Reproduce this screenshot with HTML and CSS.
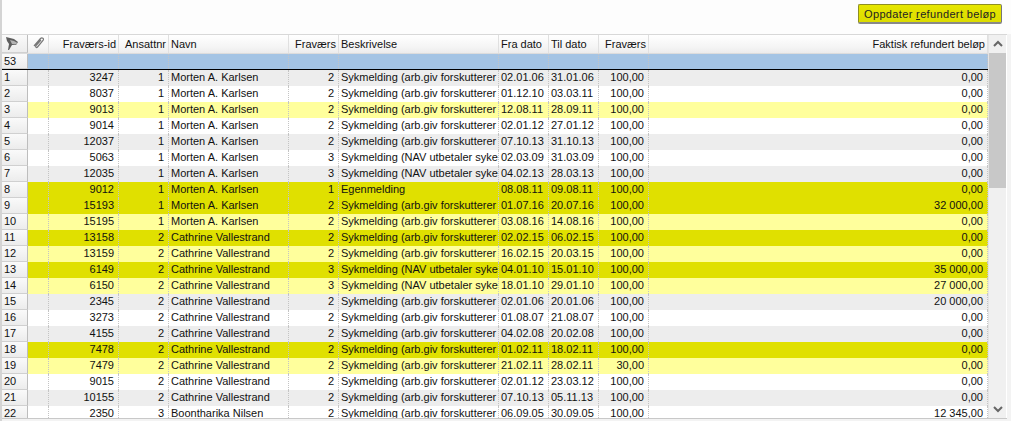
FILE: index.html
```html
<!DOCTYPE html>
<html lang="no">
<head>
<meta charset="utf-8">
<title>Fravær</title>
<link rel="stylesheet" href="styles.css">
</head>
<body>
<div class="app">
  <div class="toolbar"><button class="update"><span>Oppdater <u>r</u>efundert beløp</span></button></div>
  <div class="panel">
    <div class="grid">
      <div class="row head">
        <div class="c rh"><svg width="20" height="18" viewBox="0 0 20 18"><path d="M1 2 L9 4 L13 7 L11 10 L7 10 L4 15 L3 15 L4 9 L2 6 Z" fill="#5e5e5e"/><path d="M5 5 L9 6 L12.500 8 L10.500 9.500 L7 9 Z" fill="#b4b4b4"/></svg></div>
        <div class="c at"><svg width="16" height="16" viewBox="0 0 16 16"><path d="M3 11 L9.500 3.500 C11 2 13.500 3.500 12 5.500 L6.500 12 C5.500 13.200 4 12 5 10.700 L10 5" fill="none" stroke="#777" stroke-width="1.200"/></svg></div>
        <div class="c id r">Fraværs-id</div><div class="c an r">Ansattnr</div><div class="c na">Navn</div><div class="c ty r">Fraværs</div><div class="c be">Beskrivelse</div><div class="c fr">Fra dato</div><div class="c ti">Til dato</div><div class="c pc r">Fraværs</div><div class="c am r">Faktisk refundert beløp</div>
      </div>
      <div class="row sum"><div class="c rh">53</div><div class="c at"></div><div class="c id"></div><div class="c an"></div><div class="c na"></div><div class="c ty"></div><div class="c be"></div><div class="c fr"></div><div class="c ti"></div><div class="c pc"></div><div class="c am"></div></div>
      <div class="row gray"><div class="c rh">1</div><div class="c at"></div><div class="c id r">3247</div><div class="c an r">1</div><div class="c na">Morten A. Karlsen</div><div class="c ty r">2</div><div class="c be">Sykmelding (arb.giv forskutterer</div><div class="c fr">02.01.06</div><div class="c ti">31.01.06</div><div class="c pc r">100,00</div><div class="c am r">0,00</div></div>
      <div class="row"><div class="c rh">2</div><div class="c at"></div><div class="c id r">8037</div><div class="c an r">1</div><div class="c na">Morten A. Karlsen</div><div class="c ty r">2</div><div class="c be">Sykmelding (arb.giv forskutterer</div><div class="c fr">01.12.10</div><div class="c ti">03.03.11</div><div class="c pc r">100,00</div><div class="c am r">0,00</div></div>
      <div class="row pale"><div class="c rh">3</div><div class="c at"></div><div class="c id r">9013</div><div class="c an r">1</div><div class="c na">Morten A. Karlsen</div><div class="c ty r">2</div><div class="c be">Sykmelding (arb.giv forskutterer</div><div class="c fr">12.08.11</div><div class="c ti">28.09.11</div><div class="c pc r">100,00</div><div class="c am r">0,00</div></div>
      <div class="row"><div class="c rh">4</div><div class="c at"></div><div class="c id r">9014</div><div class="c an r">1</div><div class="c na">Morten A. Karlsen</div><div class="c ty r">2</div><div class="c be">Sykmelding (arb.giv forskutterer</div><div class="c fr">02.01.12</div><div class="c ti">27.01.12</div><div class="c pc r">100,00</div><div class="c am r">0,00</div></div>
      <div class="row gray"><div class="c rh">5</div><div class="c at"></div><div class="c id r">12037</div><div class="c an r">1</div><div class="c na">Morten A. Karlsen</div><div class="c ty r">2</div><div class="c be">Sykmelding (arb.giv forskutterer</div><div class="c fr">07.10.13</div><div class="c ti">31.10.13</div><div class="c pc r">100,00</div><div class="c am r">0,00</div></div>
      <div class="row"><div class="c rh">6</div><div class="c at"></div><div class="c id r">5063</div><div class="c an r">1</div><div class="c na">Morten A. Karlsen</div><div class="c ty r">3</div><div class="c be">Sykmelding (NAV utbetaler syke</div><div class="c fr">02.03.09</div><div class="c ti">31.03.09</div><div class="c pc r">100,00</div><div class="c am r">0,00</div></div>
      <div class="row gray"><div class="c rh">7</div><div class="c at"></div><div class="c id r">12035</div><div class="c an r">1</div><div class="c na">Morten A. Karlsen</div><div class="c ty r">3</div><div class="c be">Sykmelding (NAV utbetaler syke</div><div class="c fr">04.02.13</div><div class="c ti">28.03.13</div><div class="c pc r">100,00</div><div class="c am r">0,00</div></div>
      <div class="row olive"><div class="c rh">8</div><div class="c at"></div><div class="c id r">9012</div><div class="c an r">1</div><div class="c na">Morten A. Karlsen</div><div class="c ty r">1</div><div class="c be">Egenmelding</div><div class="c fr">08.08.11</div><div class="c ti">09.08.11</div><div class="c pc r">100,00</div><div class="c am r">0,00</div></div>
      <div class="row olive"><div class="c rh">9</div><div class="c at"></div><div class="c id r">15193</div><div class="c an r">1</div><div class="c na">Morten A. Karlsen</div><div class="c ty r">2</div><div class="c be">Sykmelding (arb.giv forskutterer</div><div class="c fr">01.07.16</div><div class="c ti">20.07.16</div><div class="c pc r">100,00</div><div class="c am r">32 000,00</div></div>
      <div class="row pale"><div class="c rh">10</div><div class="c at"></div><div class="c id r">15195</div><div class="c an r">1</div><div class="c na">Morten A. Karlsen</div><div class="c ty r">2</div><div class="c be">Sykmelding (arb.giv forskutterer</div><div class="c fr">03.08.16</div><div class="c ti">14.08.16</div><div class="c pc r">100,00</div><div class="c am r">0,00</div></div>
      <div class="row olive"><div class="c rh">11</div><div class="c at"></div><div class="c id r">13158</div><div class="c an r">2</div><div class="c na">Cathrine Vallestrand</div><div class="c ty r">2</div><div class="c be">Sykmelding (arb.giv forskutterer</div><div class="c fr">02.02.15</div><div class="c ti">06.02.15</div><div class="c pc r">100,00</div><div class="c am r">0,00</div></div>
      <div class="row pale"><div class="c rh">12</div><div class="c at"></div><div class="c id r">13159</div><div class="c an r">2</div><div class="c na">Cathrine Vallestrand</div><div class="c ty r">2</div><div class="c be">Sykmelding (arb.giv forskutterer</div><div class="c fr">16.02.15</div><div class="c ti">20.03.15</div><div class="c pc r">100,00</div><div class="c am r">0,00</div></div>
      <div class="row olive"><div class="c rh">13</div><div class="c at"></div><div class="c id r">6149</div><div class="c an r">2</div><div class="c na">Cathrine Vallestrand</div><div class="c ty r">3</div><div class="c be">Sykmelding (NAV utbetaler syke</div><div class="c fr">04.01.10</div><div class="c ti">15.01.10</div><div class="c pc r">100,00</div><div class="c am r">35 000,00</div></div>
      <div class="row pale"><div class="c rh">14</div><div class="c at"></div><div class="c id r">6150</div><div class="c an r">2</div><div class="c na">Cathrine Vallestrand</div><div class="c ty r">3</div><div class="c be">Sykmelding (NAV utbetaler syke</div><div class="c fr">18.01.10</div><div class="c ti">29.01.10</div><div class="c pc r">100,00</div><div class="c am r">27 000,00</div></div>
      <div class="row gray"><div class="c rh">15</div><div class="c at"></div><div class="c id r">2345</div><div class="c an r">2</div><div class="c na">Cathrine Vallestrand</div><div class="c ty r">2</div><div class="c be">Sykmelding (arb.giv forskutterer</div><div class="c fr">02.01.06</div><div class="c ti">20.01.06</div><div class="c pc r">100,00</div><div class="c am r">20 000,00</div></div>
      <div class="row"><div class="c rh">16</div><div class="c at"></div><div class="c id r">3273</div><div class="c an r">2</div><div class="c na">Cathrine Vallestrand</div><div class="c ty r">2</div><div class="c be">Sykmelding (arb.giv forskutterer</div><div class="c fr">01.08.07</div><div class="c ti">21.08.07</div><div class="c pc r">100,00</div><div class="c am r">0,00</div></div>
      <div class="row gray"><div class="c rh">17</div><div class="c at"></div><div class="c id r">4155</div><div class="c an r">2</div><div class="c na">Cathrine Vallestrand</div><div class="c ty r">2</div><div class="c be">Sykmelding (arb.giv forskutterer</div><div class="c fr">04.02.08</div><div class="c ti">20.02.08</div><div class="c pc r">100,00</div><div class="c am r">0,00</div></div>
      <div class="row olive"><div class="c rh">18</div><div class="c at"></div><div class="c id r">7478</div><div class="c an r">2</div><div class="c na">Cathrine Vallestrand</div><div class="c ty r">2</div><div class="c be">Sykmelding (arb.giv forskutterer</div><div class="c fr">01.02.11</div><div class="c ti">18.02.11</div><div class="c pc r">100,00</div><div class="c am r">0,00</div></div>
      <div class="row pale"><div class="c rh">19</div><div class="c at"></div><div class="c id r">7479</div><div class="c an r">2</div><div class="c na">Cathrine Vallestrand</div><div class="c ty r">2</div><div class="c be">Sykmelding (arb.giv forskutterer</div><div class="c fr">21.02.11</div><div class="c ti">28.02.11</div><div class="c pc r">30,00</div><div class="c am r">0,00</div></div>
      <div class="row"><div class="c rh">20</div><div class="c at"></div><div class="c id r">9015</div><div class="c an r">2</div><div class="c na">Cathrine Vallestrand</div><div class="c ty r">2</div><div class="c be">Sykmelding (arb.giv forskutterer</div><div class="c fr">02.01.12</div><div class="c ti">23.03.12</div><div class="c pc r">100,00</div><div class="c am r">0,00</div></div>
      <div class="row gray"><div class="c rh">21</div><div class="c at"></div><div class="c id r">10155</div><div class="c an r">2</div><div class="c na">Cathrine Vallestrand</div><div class="c ty r">2</div><div class="c be">Sykmelding (arb.giv forskutterer</div><div class="c fr">07.10.13</div><div class="c ti">05.11.13</div><div class="c pc r">100,00</div><div class="c am r">0,00</div></div>
      <div class="row"><div class="c rh">22</div><div class="c at"></div><div class="c id r">2350</div><div class="c an r">3</div><div class="c na">Boontharika Nilsen</div><div class="c ty r">2</div><div class="c be">Sykmelding (arb.giv forskutterer</div><div class="c fr">06.09.05</div><div class="c ti">30.09.05</div><div class="c pc r">100,00</div><div class="c am r">12 345,00</div></div>
    </div>
    <div class="scroll">
      <div class="arrow"><svg width="10" height="8" viewBox="0 0 10 8"><path d="M1 6 L5 2 L9 6" fill="none" stroke="#666" stroke-width="2"/></svg></div>
      <div class="track"><div class="thumb"></div></div>
      <div class="arrow"><svg width="10" height="8" viewBox="0 0 10 8"><path d="M1 2 L5 6 L9 2" fill="none" stroke="#666" stroke-width="2"/></svg></div>
    </div>
  </div>
</div>
</body>
</html>
```

FILE: styles.css
```css
* { box-sizing: border-box; }
html, body { margin: 0; height: 421px; overflow: hidden; background: #fff; }
body { font-family: "Liberation Sans", Arial, sans-serif; font-size: 11px; color: #111; }
.app { height: 421px; border-left: 2px solid #d4d4d4; background: #f3f3f3; display: flex; flex-direction: column; }
.toolbar { height: 34px; flex: none; background: #fdfdfd; display: flex; justify-content: flex-end; align-items: flex-start; padding: 4px 9px 0 0; }
.update { width: 144px; height: 20px; padding: 0; border: 1px solid #8f8f20; border-right-color: #777; border-bottom: 2px solid #888; border-radius: 2px; background: linear-gradient(#e6e600, #dcdc00); font: 11px "Liberation Sans", Arial, sans-serif; letter-spacing: .35px; white-space: nowrap; color: #222; }
.panel { height: 385px; flex: none; display: flex; border-top: 1px solid #d8d8d8; border-bottom: 1px solid #c8c8c8; background: #fff; overflow: hidden; margin-right: 4px; }
.grid { width: 986px; flex: none; }
.row { display: grid; grid-template-columns: 26px 21px 70px 50px 120px 50px 160px 50px 50px 50px 339px; height: 16px; line-height: 15px; background: #fff; }
.row.gray { background: #ededed; }
.row.pale { background: #ffff9c; }
.row.olive { background: #e0e000; }
.row.sum { background: #a4c4e4; height: 16px; border-bottom: 1px solid #000; }
.row.head { height: 19px; line-height: 18px; background: linear-gradient(#fff, #f4f4f4 70%, #ececec); border-bottom: 1px solid #dcdcdc; }
.c { overflow: hidden; white-space: nowrap; padding: 0 2px 0 2px; border-right: 1px dotted #c4c4c4; }
.c.r { text-align: right; padding-right: 4px; }
.head .c { border-right: 1px solid #e0e0e0; padding-right: 2px; }
.head .c.r { padding-right: 2px; }
.c.rh { background: linear-gradient(#fafafa, #ececec); border-right: 1px solid #bdbdbd; border-bottom: 1px solid #d0d0d0; padding-left: 2px; }
.head .rh { padding: 0 0 0 3px; }
.head .at { padding: 0 0 0 3px; }
.head svg { display: block; }
.c.at { background: transparent; }
.scroll { width: 18px; flex: none; background: #f0f0f0; display: flex; flex-direction: column; border-left: 1px solid #e4e4e4; }
.arrow { height: 18px; flex: none; display: flex; align-items: center; justify-content: center; }
.track { flex: 1; }
.thumb { height: 135px; background: #c8c8c8; }
```
